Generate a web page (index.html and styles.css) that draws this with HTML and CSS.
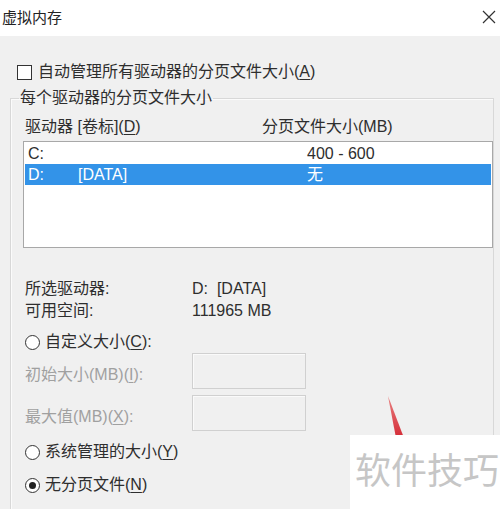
FILE: index.html
```html
<!DOCTYPE html>
<html lang="zh-CN">
<head>
<meta charset="utf-8">
<title>虚拟内存</title>
<link rel="stylesheet" href="styles.css">
</head>
<body>
<div class="window">
  <div class="titlebar">
    <span class="title">虚拟内存</span>
    <svg class="close" width="14" height="14" viewBox="0 0 14 14"><path d="M1 1 L13 13 M13 1 L1 13" stroke="#333" stroke-width="1.2" fill="none"/></svg>
  </div>
  <div class="content">
    <label class="check-row"><span class="checkbox"></span>自动管理所有驱动器的分页文件大小(<u>A</u>)</label>
    <fieldset class="group">
      <legend class="legend">每个驱动器的分页文件大小</legend>
      <div class="cols">
        <span class="col-drive">驱动器 [卷标](<u>D</u>)</span>
        <span class="col-size">分页文件大小(MB)</span>
      </div>
      <div class="listbox">
        <div class="row"><span class="c-letter">C:</span><span class="c-label"></span><span class="c-size">400 - 600</span></div>
        <div class="row selected"><span class="c-letter">D:</span><span class="c-label">[DATA]</span><span class="c-size">无</span></div>
      </div>
      <div class="info">
        <div class="info-row"><span class="info-key">所选驱动器:</span><span>D:&nbsp;&nbsp;[DATA]</span></div>
        <div class="info-row"><span class="info-key">可用空间:</span><span>111965 MB</span></div>
      </div>
      <div class="radio-row r-custom"><span class="radio"></span>自定义大小(<u>C</u>):</div>
      <div class="field-row f-init"><span class="field-label">初始大小(MB)(<u>I</u>):</span><span class="input"></span></div>
      <div class="field-row f-max"><span class="field-label">最大值(MB)(<u>X</u>):</span><span class="input"></span></div>
      <div class="radio-row r-system"><span class="radio"></span>系统管理的大小(<u>Y</u>)</div>
      <div class="radio-row r-none"><span class="radio checked"></span>无分页文件(<u>N</u>)</div>
    </fieldset>
  </div>
  <svg class="arrow" width="30" height="50" viewBox="0 0 30 50">
    <defs>
      <linearGradient id="ag" x1="0" y1="0" x2="0" y2="1">
        <stop offset="0" stop-color="#e88080"/>
        <stop offset="1" stop-color="#d42a35"/>
      </linearGradient>
    </defs>
    <polygon points="6,3 14,45 22,45" fill="url(#ag)"/>
  </svg>
  <div class="watermark">软件技巧</div>
</div>
</body>
</html>
```
FILE: styles.css
```css
* { box-sizing: border-box; }
html, body { margin: 0; padding: 0; }
body {
  width: 500px;
  height: 509px;
  overflow: hidden;
  background: #f0f0f0;
  font-family: "Liberation Sans", "Noto Sans CJK SC", sans-serif;
  font-size: 16px;
  color: #2e2e2e;
}
u { text-decoration: underline; text-underline-offset: 2px; }
.window { position: relative; width: 500px; height: 509px; }
.titlebar {
  height: 36px;
  background: #fff;
  display: flex;
  align-items: center;
  justify-content: space-between;
  padding: 0 4px 0 2px;
}
.title { font-size: 15px; color: #222; line-height: 20px; }
.close { display: block; margin-top: -2px; }
.content { padding: 28px 0 0 10px; }
.check-row {
  display: flex;
  align-items: center;
  height: 16px;
  line-height: 16px;
  padding-left: 7px;
}
.checkbox {
  width: 15px;
  height: 15px;
  border: 1px solid #333;
  background: #fff;
  margin-right: 6px;
}
.group {
  margin: 8px 0 0 0;
  width: 484px;
  height: 600px;
  border: 1px solid #d8d8d8;
  box-shadow: inset 1px 1px 0 #fbfbfb;
  padding: 0 0 0 12px;
}
.legend {
  padding: 0 1px;
  margin-left: -4px;
  line-height: 20px;
}
.cols {
  display: flex;
  height: 20px;
  line-height: 20px;
  margin-top: 9px;
  padding-left: 2px;
}
.col-drive { width: 237px; }
.listbox {
  margin-top: 4px;
  width: 470px;
  height: 107px;
  background: #fff;
  border: 1px solid #a8a8a8;
  padding: 1px 1px 0 1px;
}
.row {
  display: flex;
  height: 21px;
  line-height: 22px;
  padding-left: 3px;
}
.row.selected { background: #3393e8; color: #fff; }
.c-letter { width: 50px; }
.c-label { width: 229px; }
.info { margin-top: 30px; padding-left: 2px; }
.info-row { display: flex; height: 22px; line-height: 22px; }
.info-key { width: 167px; }
.radio-row {
  display: flex;
  align-items: center;
  height: 20px;
  line-height: 20px;
  padding-left: 2px;
}
.radio {
  width: 15px;
  height: 15px;
  border: 1px solid #333;
  border-radius: 50%;
  background: #fff;
  margin-right: 5px;
  display: flex;
  align-items: center;
  justify-content: center;
}
.radio.checked::after {
  content: "";
  width: 7px;
  height: 7px;
  border-radius: 50%;
  background: #222;
}
.r-custom { margin-top: 10px; }
.field-row { display: flex; align-items: center; padding-left: 2px; }
.f-init { margin-top: 1px; }
.f-max { margin-top: 6px; }
.field-label { width: 167px; color: #a0a0a0; line-height: 20px; padding-top: 7px; }
.input {
  width: 114px;
  height: 36px;
  border: 1px solid #d0d0d0;
  box-shadow: inset 1px 1px 0 #fafafa;
  background: #f0f0f0;
}
.r-system { margin-top: 11px; }
.r-none { margin-top: 13px; }
.arrow { position: absolute; left: 382px; top: 393px; }
.watermark {
  position: absolute;
  left: 350px;
  top: 435px;
  width: 150px;
  height: 74px;
  background: #fff;
  color: #c6c6c6;
  font-size: 36px;
  line-height: 40px;
  padding: 17px 0 0 5px;
  white-space: nowrap;
}
```
